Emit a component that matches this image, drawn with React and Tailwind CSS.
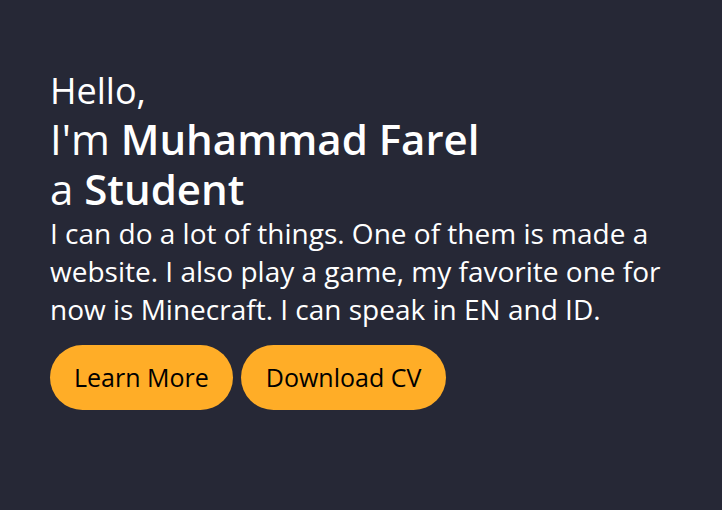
const App = () => {
  return (
    <div className="min-h-screen bg-[#262836] text-white font-['Open_Sans',sans-serif]">
      <section className="px-[50px] pt-[68px]">
        <p className="text-[36px] leading-[46px]">Hello,</p>
        <h1 className="text-[42px] leading-[50px]">
          I'm <span className="font-semibold">Muhammad Farel</span>
          <br />a <span className="font-semibold">Student</span>
        </h1>
        <p className="text-[28px] leading-[38px] max-w-[662px]">
          I can do a lot of things. One of them is made a website. I also play a game, my favorite one
          for now is Minecraft. I can speak in EN and ID.
        </p>
        <div className="flex gap-2 mt-[17px]">
          <button className="h-[65px] px-[24px] rounded-full bg-[#ffad27] text-black text-[25px]">
            Learn More
          </button>
          <button className="h-[65px] px-[25px] rounded-full bg-[#ffad27] text-black text-[25px]">
            Download CV
          </button>
        </div>
      </section>
    </div>
  );
};

export default App;
